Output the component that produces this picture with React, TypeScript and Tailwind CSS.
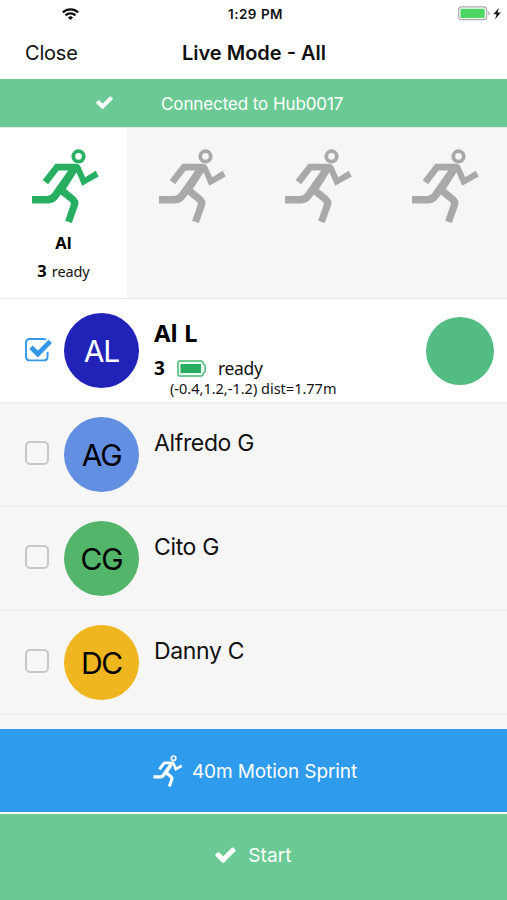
import React from 'react';

interface IconProps {
  className?: string;
}

interface Athlete {
  name: string;
  initials: string;
  color: string;
}

const athletes: Athlete[] = [
  { name: 'Alfredo G', initials: 'AG', color: 'bg-[#628fe2]' },
  { name: 'Cito G', initials: 'CG', color: 'bg-[#53b56a]' },
  { name: 'Danny C', initials: 'DC', color: 'bg-[#efb61f]' },
];

function RunnerIcon({ className }: IconProps) {
  return (
    <svg viewBox="0 0 67 74" className={className} fill="currentColor">
      <circle cx="46.5" cy="7.4" r="5.2" fill="none" stroke="currentColor" strokeWidth="3.8" />
      <path d="M10.7 31 23.4 14.8H43.5Q47.2 14.8 48.6 18L53.2 28.2 63.7 21.8 66.7 27.5 50.2 36.8 44.5 23.2 33.8 40 42.6 47.3Q47.6 51.5 46.2 56L39.8 74 33.2 71.8 38.8 55.5Q39.2 54 37.8 52.8L28.8 45.5 25.6 49.8Q22 54.4 16.5 54.4H0V47H15Q18.2 47 20.2 44.2L36.2 21.5H26.6L16.1 35.2Z" />
    </svg>
  );
}

function CheckIcon({ className }: IconProps) {
  return (
    <svg viewBox="121 302 1550 1220" className={className} fill="currentColor">
      <path d="M1671 566q0 40-28 68l-724 724-136 136q-28 28-68 28t-68-28l-136-136-362-362q-28-28-28-68t28-68l136-136q28-28 68-28t68 28l294 295 656-657q28-28 68-28t68 28l136 136q28 28 28 68z" />
    </svg>
  );
}

function WifiIcon({ className }: IconProps) {
  return (
    <svg viewBox="0 0 17 12" className={className} fill="none" stroke="currentColor" strokeWidth="2.2">
      <path d="M.8 4.5a11 11 0 0 1 15.4 0" />
      <path d="M3.5 7.4a7.1 7.1 0 0 1 10 0" />
      <path d="M8.5 12 5.9 9.6a3.7 3.7 0 0 1 5.2 0Z" fill="currentColor" stroke="none" />
    </svg>
  );
}

function PhoneBattery() {
  return (
    <svg viewBox="0 0 44 15" className="h-[15px] w-[44px]">
      <rect x=".7" y=".9" width="28" height="12.8" rx="3" fill="#fff" stroke="#a9aaa9" strokeWidth="1.2" />
      <rect x="2.5" y="2.7" width="24.2" height="9.2" rx="1" fill="#4bd763" />
      <path d="M30.3 5.3q1.5.6 1.5 2t-1.5 2Z" fill="#a9aaa9" />
      <path d="M40.9 1.7 35.4 8.2h3.2l-1.6 5.3 5.8-7h-3.4Z" fill="#111" />
    </svg>
  );
}

function SensorBattery() {
  return (
    <svg viewBox="0 0 29 17" className="h-[17px] w-[29px]">
      <path
        d="M2.4 1h21.8q1.4 0 1.8 1.5l.6 1.6q1.6.8 1.6 2.4v4q0 1.6-1.6 2.4l-.6 1.6q-.4 1.5-1.8 1.5H2.4Q1 16 1 14.5v-12Q1 1 2.4 1Z"
        fill="#effaf3"
        stroke="#47bb75"
        strokeWidth="1.5"
      />
      <rect x="3.5" y="4" width="20.5" height="9" fill="#27ae60" />
    </svg>
  );
}

function CheckedBox() {
  return (
    <svg viewBox="0 0 28 24" className="h-6 w-7 shrink-0" fill="none" stroke="#3498e8">
      <path d="M21 1.5Q20 1 18.5 1H5Q1 1 1 5v13.4q0 4 4 4h13.6q4 0 4-4v-4.6" strokeWidth="1.9" />
      <path d="M6 9.2 12.8 16 25.3 3.4" strokeWidth="4.8" />
    </svg>
  );
}

function Avatar({ initials, className }: { initials: string; className: string }) {
  return (
    <div className={`flex size-[75px] shrink-0 items-center justify-center rounded-full pt-0.5 text-[30px] tracking-[-1.2px] ${className}`}>
      {initials}
    </div>
  );
}

export default function App() {
  return (
    <div className="flex h-[900px] w-[507px] flex-col overflow-hidden bg-white font-['Inter','Liberation_Sans',sans-serif] text-[#111]">
      {/* Status bar */}
      <div className="grid h-[27px] shrink-0 grid-cols-3 items-center">
        <WifiIcon className="ml-[62px] h-3 w-[17px]" />
        <span className="pt-px pl-1 text-center text-[13.5px] font-semibold tracking-[0.5px]">1:29 PM</span>
        <div className="flex justify-end pr-[5px]">
          <PhoneBattery />
        </div>
      </div>

      {/* Title */}
      <div className="grid h-[52px] shrink-0 grid-cols-[1fr_auto_1fr] items-center pb-px">
        <span className="pl-[25px] text-xl tracking-[-0.2px]">Close</span>
        <span className="pl-px text-xl font-semibold">Live Mode - All</span>
      </div>

      {/* Hub connection */}
      <div className="flex h-12 shrink-0 items-center bg-[#6bca94] text-white">
        <CheckIcon className="mb-px ml-24 h-[13px] w-[17px]" />
        <span className="mt-[3px] ml-12 text-[17px] tracking-[-0.1px]">Connected to Hub0017</span>
      </div>

      {/* Lanes */}
      <div className="grid h-[172px] shrink-0 grid-cols-[127px_127px_126px_127px] border-t border-b border-[#e8e8e8] bg-[#f6f6f6] font-['Noto_Sans',sans-serif]">
        <div className="flex flex-col items-center bg-white pt-[21px]">
          <RunnerIcon className="ml-[3px] h-[74px] w-[67px] text-[#27ae60]" />
          <span className="mt-2 text-[16.5px] leading-6 font-bold text-black">Al</span>
          <div className="mt-1 flex items-baseline gap-[5px] leading-6">
            <span className="text-[16.5px] font-bold text-black">3</span>
            <span className="text-[14.5px] tracking-[-0.1px]">ready</span>
          </div>
        </div>
        {[1, 2, 3].map((lane) => (
          <div key={lane} className="flex flex-col items-center pt-[21px]">
            <RunnerIcon className="ml-[3px] h-[74px] w-[67px] text-[#a9a9a9]" />
          </div>
        ))}
      </div>

      {/* Athletes */}
      <div className="h-[430px] shrink-0 overflow-hidden bg-[#f6f6f6]">
        <div className="flex h-[104px] items-center border-b border-[#e8e8e8] bg-white pr-[13px] pl-[25px]">
          <div className="pb-px">
            <CheckedBox />
          </div>
          <Avatar initials="AL" className="ml-[11px] bg-[#2022b8] text-white" />
          <div className="mt-3 ml-[15px] flex flex-1 flex-col font-['Noto_Sans',sans-serif]">
            <span className="text-2xl leading-8 font-bold text-black">Al L</span>
            <div className="mt-[7px] flex h-6 items-center leading-6">
              <span className="text-[19px] leading-6 font-bold text-black">3</span>
              <span className="ml-3">
                <SensorBattery />
              </span>
              <span className="ml-3 text-[17.5px] leading-6 tracking-[-0.3px]">ready</span>
            </div>
            <span className="ml-4 text-[14.5px] leading-4">(-0.4,1.2,-1.2) dist=1.77m</span>
          </div>
          <div className="size-[68px] shrink-0 rounded-full bg-[#53bc82]" />
        </div>
        {athletes.map((athlete) => (
          <div key={athlete.initials} className="flex h-[104px] items-center border-b border-[#e8e8e8] pl-[25px]">
            <div className="mb-[3px] size-6 shrink-0 rounded-[5px] border-2 border-[#c8c8c8]" />
            <Avatar initials={athlete.initials} className={`ml-[15px] text-black ${athlete.color}`} />
            <span className="mb-[23px] ml-[15px] text-[23px] tracking-[-0.35px]">{athlete.name}</span>
          </div>
        ))}
      </div>

      {/* Actions */}
      <button className="flex h-[83px] shrink-0 items-center justify-center gap-[9px] bg-[#2f9bed] pl-[3px] text-white">
        <RunnerIcon className="h-8 w-[30px]" />
        <span className="mt-[3px] text-[19px] tracking-[-0.1px]">40m Motion Sprint</span>
      </button>
      <button className="mt-0.5 flex h-[86px] shrink-0 items-center justify-center gap-3 bg-[#6bca94] pb-1 text-white">
        <CheckIcon className="h-4 w-[21px]" />
        <span className="mt-[3px] text-[19px] tracking-[0.1px]">Start</span>
      </button>
    </div>
  );
}
